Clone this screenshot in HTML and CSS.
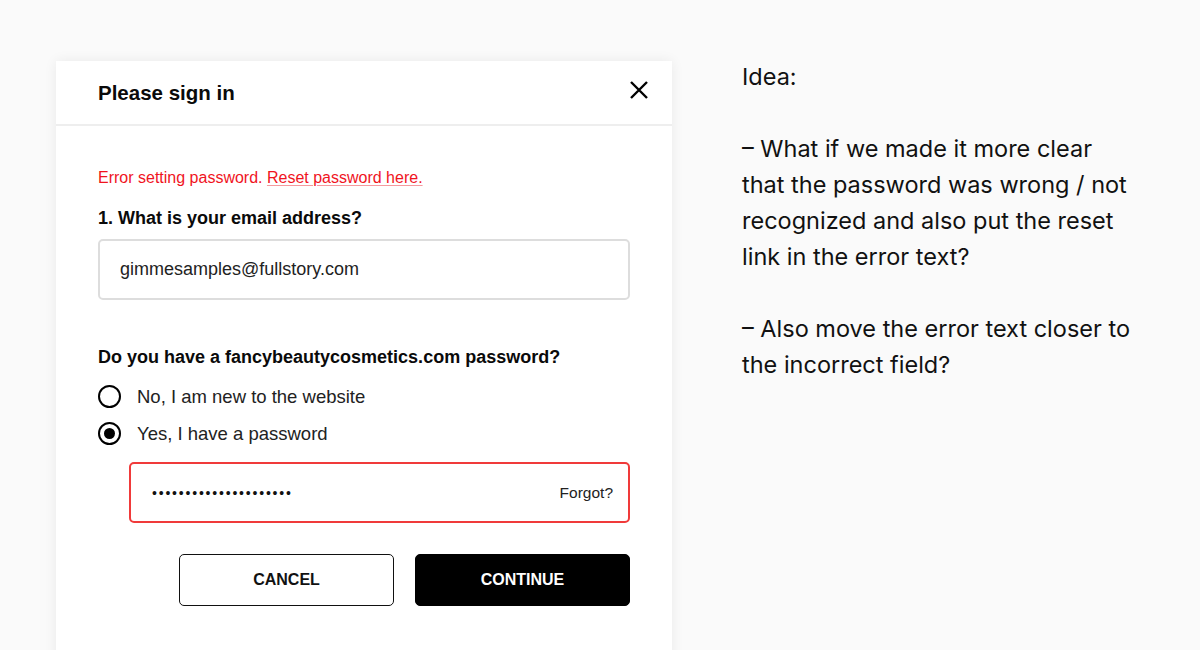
FILE: index.html
```html
<!DOCTYPE html>
<html lang="en">
<head>
  <meta charset="UTF-8">
  <meta name="viewport" content="width=device-width, initial-scale=1">
  <title>Please sign in</title>
  <link rel="stylesheet" href="styles.css">
</head>
<body>
  <div class="page">
    <div class="modal">
      <div class="modal-header">
        <h2>Please sign in</h2>
        <button class="close" aria-label="Close">
          <svg width="20" height="20" viewBox="0 0 20 20"><path d="M2 2 L18 18 M18 2 L2 18" stroke="#000" stroke-width="2.4" fill="none"/></svg>
        </button>
      </div>
      <div class="modal-body">
        <p class="error">Error setting password. <a href="#">Reset password here.</a></p>
        <label class="field-label" for="email">1. What is your email address?</label>
        <div class="input">gimmesamples@fullstory.com</div>

        <p class="field-label question">Do you have a fancybeautycosmetics.com password?</p>
        <div class="radio-row">
          <span class="radio"></span>
          <span>No, I am new to the website</span>
        </div>
        <div class="radio-row">
          <span class="radio checked"></span>
          <span>Yes, I have a password</span>
        </div>
        <div class="input password">
          <span class="dots">•••••••••••••••••••••</span>
          <span class="forgot">Forgot?</span>
        </div>

        <div class="actions">
          <button class="btn btn-cancel">CANCEL</button>
          <button class="btn btn-continue">CONTINUE</button>
        </div>
      </div>
    </div>

    <div class="note">
      <p>Idea:</p>
      <p>– What if we made it more clear<br>that the password was wrong / not<br>recognized and also put the reset<br>link in the error text?</p>
      <p>– Also move the error text closer to<br>the incorrect field?</p>
    </div>
  </div>
</body>
</html>
```

FILE: styles.css
```css
* { box-sizing: border-box; }
body {
  margin: 0;
  background-color: #fafafa;
  font-family: 'Liberation Sans', Arial, sans-serif;
  color: #111;
  height: 650px;
  overflow: hidden;
}
.page {
  display: flex;
  gap: 70px;
  padding: 61px 0 0 56px;
}
.modal {
  width: 616px;
  height: 620px;
  background-color: #fff;
  box-shadow: 0 0 12px rgba(0, 0, 0, 0.07);
}
.modal-header {
  display: flex;
  justify-content: space-between;
  align-items: center;
  height: 65px;
  padding: 0 23px 0 42px;
  border-bottom: 2px solid #eeeeee;
}
.modal-header h2 {
  margin: 0;
  font-size: 20.5px;
  font-weight: bold;
  color: #0a0a0a;
}
.close {
  background: none;
  border: 0;
  padding: 0;
  width: 20px;
  height: 20px;
  margin-top: -5px;
  cursor: pointer;
}
.modal-body {
  padding: 43px 42px 0;
}
.error {
  margin: 0;
  font-size: 16px;
  line-height: 18px;
  color: #f0141e;
}
.error a {
  color: #f0141e;
  text-decoration: underline;
  text-decoration-color: #f59a9e;
  text-underline-offset: 2px;
}
.field-label {
  display: block;
  margin: 21px 0 11px;
  font-size: 18px;
  line-height: 20px;
  font-weight: bold;
  color: #0a0a0a;
}
.input {
  display: flex;
  align-items: center;
  justify-content: space-between;
  height: 61px;
  padding: 0 15px 0 20px;
  border: 2px solid #dddddd;
  border-radius: 5px;
  font-size: 18px;
  color: #222;
}
.question {
  margin-top: 47px;
  margin-bottom: 11px;
}
.radio-row {
  display: flex;
  align-items: center;
  gap: 16px;
  height: 37px;
  font-size: 18.5px;
  color: #222;
}
.radio {
  width: 23px;
  height: 23px;
  border: 2px solid #000;
  border-radius: 50%;
  display: flex;
  align-items: center;
  justify-content: center;
}
.radio.checked::after {
  content: "";
  width: 11px;
  height: 11px;
  border-radius: 50%;
  background-color: #000;
}
.password {
  margin: 10px 0 0 31px;
  border-color: #f03a3a;
  padding-left: 21px;
}
.dots {
  font-size: 14px;
  letter-spacing: 1.8px;
  color: #111;
}
.forgot {
  font-size: 15.5px;
  color: #222;
}
.actions {
  display: flex;
  justify-content: flex-end;
  gap: 21px;
  margin-top: 31px;
}
.btn {
  width: 215px;
  height: 52px;
  border-radius: 5px;
  font-family: 'Liberation Sans', Arial, sans-serif;
  font-size: 16px;
  font-weight: bold;
  cursor: pointer;
}
.btn-cancel {
  background-color: #fff;
  border: 1.5px solid #111;
  color: #111;
}
.btn-continue {
  background-color: #000;
  border: 1px solid #000;
  color: #fff;
}
.note {
  width: 440px;
  margin-top: -2px;
  font-family: Inter, 'Noto Sans', sans-serif;
  font-size: 23.5px;
  line-height: 36px;
  color: #111;
}
.note p {
  margin: 0 0 36px;
}
```
